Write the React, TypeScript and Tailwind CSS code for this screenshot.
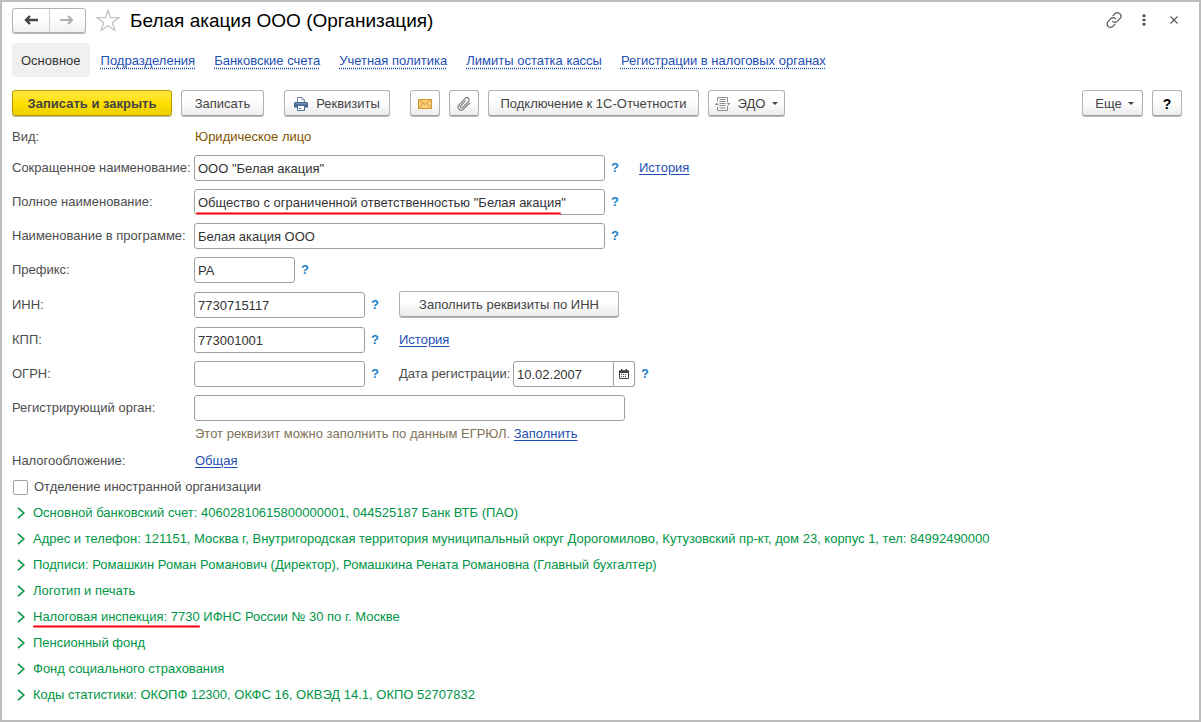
import React, { useState } from 'react';

const tabs = [
  'Подразделения',
  'Банковские счета',
  'Учетная политика',
  'Лимиты остатка кассы',
  'Регистрации в налоговых органах'
];

const sections = [
  { title: 'Основной банковский счет: 40602810615800000001, 044525187 Банк ВТБ (ПАО)' },
  { title: 'Адрес и телефон: 121151, Москва г, Внутригородская территория муниципальный округ Дорогомилово, Кутузовский пр-кт, дом 23, корпус 1, тел: 84992490000' },
  { title: 'Подписи: Ромашкин Роман Романович (Директор), Ромашкина Рената Романовна (Главный бухгалтер)' },
  { title: 'Логотип и печать' },
  { marked: 'Налоговая инспекция: 7730', title: ' ИФНС России № 30 по г. Москве' },
  { title: 'Пенсионный фонд' },
  { title: 'Фонд социального страхования' },
  { title: 'Коды статистики: ОКОПФ 12300, ОКФС 16, ОКВЭД 14.1, ОКПО 52707832' }
];

const buttonBase = 'mb-px flex h-[26px] shrink-0 items-center justify-center rounded-[3px] border pt-px whitespace-nowrap';
const grayButton = `${buttonBase} border-[#b2b2b2] border-b-[#a0a0a0] bg-linear-to-b from-white from-40% to-[#ececec] text-[#444444] shadow-[0_1px_0_#b8b8b8]`;
const inputClass = 'h-[26px] rounded-[3px] border border-[#a0a0a0] bg-white px-[3px] text-[#333333] outline-none focus:border-[#d9a800]';
const linkClass = 'text-[#1d4fb4] underline underline-offset-2';

const Help = () => (
  <button type="button" aria-label="Подсказка" className="w-[34px] shrink-0 pl-1.5 text-left font-bold text-[#1a80c8]">?</button>
);

const Caret = () => (
  <svg width="6" height="3" viewBox="0 0 6 3" fill="#444444"><path d="M0 0h6L3 3z" /></svg>
);

const RedLine = ({ className }: { className: string }) => (
  <span className={`absolute h-[3px] rounded-full border-y border-[#ff8080] bg-[#f00010] ${className}`} />
);

interface FieldProps {
  id: string;
  label: string;
  value: string;
  onChange: (value: string) => void;
  width: string;
  help?: boolean;
  underline?: boolean;
  children?: React.ReactNode;
}

const Field: React.FC<FieldProps> = ({ id, label, value, onChange, width, help = true, underline, children }) => (
  <div className="flex items-center">
    <label htmlFor={id} className="w-[182px] shrink-0 whitespace-nowrap">{label}</label>
    <div className="relative flex">
      <input id={id} type="text" value={value} onChange={(e) => onChange(e.target.value)} className={`${inputClass} ${width}`} />
      {underline && <RedLine className="bottom-0 left-0.5 w-[365px]" />}
    </div>
    {help && <Help />}
    {children}
  </div>
);

const App: React.FC = () => {
  const [form, setForm] = useState({
    shortName: 'ООО "Белая акация"',
    fullName: 'Общество с ограниченной ответственностью "Белая акация"',
    programName: 'Белая акация ООО',
    prefix: 'РА',
    inn: '7730715117',
    kpp: '773001001',
    ogrn: '',
    regDate: '10.02.2007',
    regOrgan: '',
    foreign: false
  });

  const set = (key: keyof typeof form) => (value: string) => setForm({ ...form, [key]: value });

  return (
    <div className="min-h-screen border-2 border-[#bdbdbd] bg-white pr-[17px] pl-2.5 font-['Liberation_Sans',Arial,sans-serif] text-[13px] leading-[18px] text-[#4d4d4d]">
      <header className="flex h-8 items-center pt-1">
        <div className="flex h-[25px] w-[74px] shrink-0 rounded-[3px] border border-[#b2b2b2] bg-linear-to-b from-white from-40% to-[#f0f0f0] shadow-[0_1px_0_#b8b8b8]">
          <button type="button" aria-label="Назад" className="flex flex-1 items-center justify-center border-r border-[#cccccc]">
            <svg width="14" height="10" viewBox="0 0 14 10" fill="none" stroke="#444444" strokeWidth="2.4"><path d="M14 5H2M6 1 2 5l4 4" /></svg>
          </button>
          <button type="button" aria-label="Вперед" className="flex flex-1 items-center justify-center">
            <svg width="14" height="10" viewBox="0 0 14 10" fill="none" stroke="#b0b0b0" strokeWidth="2.2"><path d="M0 5h12M8 1l4 4-4 4" /></svg>
          </button>
        </div>
        <button type="button" aria-label="В избранное" className="ml-2.5 shrink-0">
          <svg width="24" height="23" viewBox="0 0 24 23" fill="none" stroke="#b4b9bf" strokeWidth="1.1">
            <path d="M12 1.2 14.6 8.8H22.9L16.3 13.6 18.8 21.4 12 16.6 5.2 21.4 7.7 13.6 1.1 8.8H9.4Z" />
          </svg>
        </button>
        <h1 className="ml-2.5 flex-1 pt-0.5 text-[19px] leading-6 text-black">Белая акация ООО (Организация)</h1>
        <div className="flex items-center gap-5">
          <button type="button" aria-label="Получить ссылку">
            <svg width="16" height="16" viewBox="0 0 16 16" fill="none" stroke="#555555" strokeWidth="1.2" strokeLinecap="round">
              <path d="M7 3.6 9 1.6a3.3 3.3 0 0 1 4.9.2 3.3 3.3 0 0 1 .2 4.6l-2.9 3a3.2 3.2 0 0 1-4.6 0" />
              <path d="M9 12.2 7.1 14.2a3.3 3.3 0 0 1-4.9.1 3.3 3.3 0 0 1-.2-4.7l2.9-3a3.2 3.2 0 0 1 4.6 0" />
            </svg>
          </button>
          <button type="button" aria-label="Меню">
            <svg width="4" height="12" viewBox="0 0 4 12" fill="#555555"><path d="M.5.5h3v2.6h-3zM.5 4.7h3v2.6h-3zM.5 8.9h3v2.6h-3z" /></svg>
          </button>
          <button type="button" aria-label="Закрыть" className="flex w-4 justify-center">
            <svg width="8" height="8" viewBox="0 0 8 8" stroke="#555555" strokeWidth="1.1"><path d="m.5.5 7 7M7.5.5l-7 7" /></svg>
          </button>
        </div>
      </header>

      <nav className="mt-[9px] flex items-center whitespace-nowrap">
        <a href="#" className="rounded-[3px] bg-[#f0f0f0] px-[9px] pt-[9px] pb-[7px] text-[#333333]">Основное</a>
        {tabs.map(tab => (
          <a key={tab} href="#" className="pt-[9px] pr-2 pb-[7px] pl-[11px] text-[#1d4fb4]">
            <span className="underline decoration-dotted underline-offset-3">{tab}</span>
          </a>
        ))}
      </nav>

      <div className="mt-[13px] flex items-center gap-[9px]">
        <button type="button" className={`${buttonBase} w-40 border-[#b39b00] bg-linear-to-b from-[#ffe838] via-[#ffe000] to-[#ecd000] font-bold text-[#444444] shadow-[0_1px_0_#b8b8b8]`}>Записать и закрыть</button>
        <button type="button" className={`${grayButton} w-[83px]`}>Записать</button>
        <button type="button" className={`${grayButton} mx-[11px] w-[106px] gap-2`}>
          <svg width="14" height="14" viewBox="0 0 14 14">
            <path d="M3.5 5V.5H8L10.500 3V5" fill="#fff" stroke="#6b87a8" />
            <path d="M8 .5V3h2.5" fill="none" stroke="#6b87a8" strokeWidth=".8" />
            <path d="M1 5h12l1 1v4.5H0V6z" fill="#3f6690" />
            <path d="M1 6.8h12" stroke="#86a5c5" />
            <path d="M3.5 8.5h7v5h-7z" fill="#fff" stroke="#4d7299" />
            <path d="M5 11.5h2" stroke="#4d7299" />
          </svg>
          Реквизиты
        </button>
        <button type="button" aria-label="Письмо" className={`${grayButton} w-[30px]`}>
          <svg width="14" height="10" viewBox="0 0 14 10" fill="#f8ce7c" stroke="#d59430">
            <path d="M.5.5h13v9H.5z" />
            <path d="m.5.5 6.5 5 6.5-5M.5 9.5 5 4.200M13.500 9.500 9 4.200" fill="none" strokeWidth=".9" />
          </svg>
        </button>
        <button type="button" aria-label="Присоединенные файлы" className={`${grayButton} w-[30px]`}>
          <svg width="14" height="14" viewBox="0 0 14 14" fill="none" stroke="#777777" strokeWidth="1.1" strokeLinecap="round">
            <path d="M8.3 3.8 3.8 8.6a1.3 1.3 0 0 0 1.9 1.8l5.700-6a2.200 2.200 0 0 0-3.200-3.100L2 7.800a3.100 3.100 0 0 0 4.400 4.400L12.500 6" />
          </svg>
        </button>
        <button type="button" className={`${grayButton} w-[211px]`}>Подключение к 1С-Отчетности</button>
        <button type="button" className={`${grayButton} w-[77px] gap-[7px]`}>
          <svg width="16" height="14" viewBox="0 0 16 14" fill="none" stroke="#8c8c8c">
            <path d="M2.5 4V.5h10V5M2.500 10v3.500h10V9" />
            <path d="M4.500 2.500h6M4.500 4.500h6M4.500 6.500h6M4.500 8.500h6M4.500 11h6" />
            <path d="M3 7.500H.5M12.500 6.500H15" />
            <path d="M0 8h4L2 5.500zM11.500 6h4l-2 2.500z" fill="#8c8c8c" stroke="none" />
          </svg>
          ЭДО
          <Caret />
        </button>
        <button type="button" className={`${grayButton} ml-auto w-[61px] gap-1.5 pl-1`}>Еще <Caret /></button>
        <button type="button" aria-label="Справка" className={`${grayButton} w-[30px] text-sm font-bold text-black`}>?</button>
      </div>

      <form className="mt-[11px] flex flex-col gap-2" onSubmit={(e) => e.preventDefault()}>
        <div className="flex h-[19px] items-start">
          <span className="w-[183px] shrink-0">Вид:</span>
          <span className="text-[#7f5500]">Юридическое лицо</span>
        </div>
        <Field id="shortName" label="Сокращенное наименование:" value={form.shortName} onChange={set('shortName')} width="w-[411px]">
          <a href="#" className={linkClass}>История</a>
        </Field>
        <Field id="fullName" label="Полное наименование:" value={form.fullName} onChange={set('fullName')} width="w-[411px]" underline />
        <Field id="programName" label="Наименование в программе:" value={form.programName} onChange={set('programName')} width="w-[411px]" />
        <Field id="prefix" label="Префикс:" value={form.prefix} onChange={set('prefix')} width="w-[101px]" />
        <Field id="inn" label="ИНН:" value={form.inn} onChange={set('inn')} width="w-[171px]">
          <div className="pb-px">
            <button type="button" className={`${grayButton} w-[220px]`}>Заполнить реквизиты по ИНН</button>
          </div>
        </Field>
        <Field id="kpp" label="КПП:" value={form.kpp} onChange={set('kpp')} width="w-[171px]">
          <a href="#" className={linkClass}>История</a>
        </Field>
        <Field id="ogrn" label="ОГРН:" value={form.ogrn} onChange={set('ogrn')} width="w-[171px]">
          <label htmlFor="regDate" className="w-[114px] shrink-0 whitespace-nowrap">Дата регистрации:</label>
          <div className="flex">
            <input id="regDate" type="text" value={form.regDate} onChange={(e) => set('regDate')(e.target.value)} className={`${inputClass} w-[101px] rounded-r-none`} />
            <button type="button" aria-label="Выбрать дату" className="flex w-[21px] items-center justify-center rounded-r-[3px] border border-l-0 border-[#a0a0a0]">
              <svg width="10" height="10" viewBox="0 0 10 10">
                <path d="M.5 2h9v7.500h-9z" fill="#fff" stroke="#444444" />
                <path d="M0 1.500h10V4H0zM2 0h1.500v2H2zM6.500 0H8v2H6.500z" fill="#444444" />
                <path d="M2 5.500h6M2 7.500h6" stroke="#444444" strokeDasharray="1 1" />
              </svg>
            </button>
          </div>
          <Help />
        </Field>
        <Field id="regOrgan" label="Регистрирующий орган:" value={form.regOrgan} onChange={set('regOrgan')} width="w-[431px]" help={false} />
        <div className="-mt-1 mb-px pl-[183px] text-[#7f7259]">
          Этот реквизит можно заполнить по данным ЕГРЮЛ. <a href="#" className={linkClass}>Заполнить</a>
        </div>
        <div className="flex">
          <span className="w-[183px] shrink-0">Налогообложение:</span>
          <a href="#" className={linkClass}>Общая</a>
        </div>
        <label className="flex items-center gap-1.5">
          <input
            type="checkbox"
            checked={form.foreign}
            onChange={(e) => setForm({ ...form, foreign: e.target.checked })}
            className="ml-px size-[15px] appearance-none rounded-[2px] border border-[#a0a0a0] bg-white checked:bg-[#ffe000]"
          />
          Отделение иностранной организации
        </label>
        {sections.map(section => (
          <button key={section.title} type="button" className="flex items-center gap-2 pl-[5px] text-left text-[#009646]">
            <svg width="8" height="12" viewBox="0 0 8 12" fill="none" stroke="#009646" strokeWidth="1.6" className="shrink-0"><path d="m1 .8 5.800 5.200L1 11.200" /></svg>
            <span>
              {section.marked && <span className="relative">{section.marked}<RedLine className="-bottom-1 left-0 w-full" /></span>}
              {section.title}
            </span>
          </button>
        ))}
      </form>
    </div>
  );
};

export default App;
